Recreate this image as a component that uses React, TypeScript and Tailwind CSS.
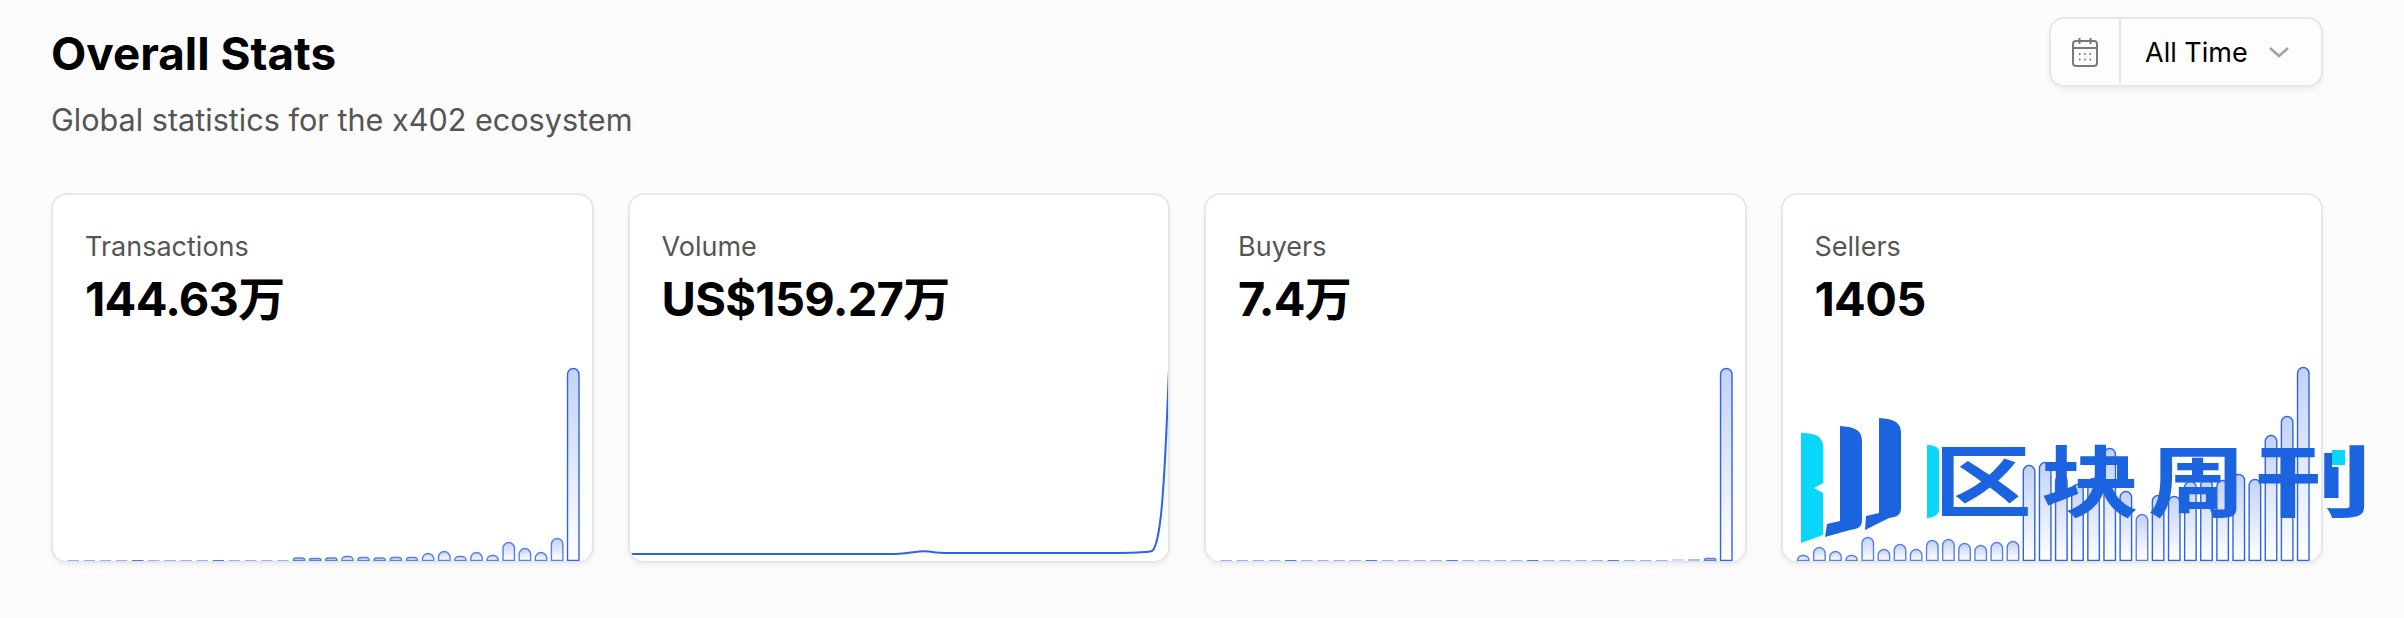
const txBars = [1, 1, 1, 1, 1, 1, 1, 1, 1, 1, 1, 1, 1, 1, 2.5, 2, 2.5, 4, 3, 2.5, 3, 3, 7, 9, 4, 8, 5, 18, 12, 8, 22, 192];
const buyerBars = [1, 1, 1, 1, 1, 1, 1, 1, 1, 1, 1, 1, 1, 1, 1, 1, 1, 1, 1, 1, 1, 1, 1, 1, 1, 1, 1, 1, 1.5, 1.5, 2, 192];
const sellerBars = [5, 13, 9, 5, 23, 11, 16, 11, 20, 21, 17, 15, 18, 19, 95, 98, 85, 76, 82, 112, 69, 46, 65, 64, 79, 81, 80, 86, 81, 125, 144, 193];

const linePath = "M0 193H260C275 193 285 190.3 295 190.300C305 190.300 300 192 320 192H480C500 192 518 191 521 190.300C525 190.300 530 175 533 130C536 90 538 30 539 8";

const BarChart = ({ bars, id }: { bars: number[]; id: string }) => {
  return (
    <svg width="538" height="200" viewBox="0 0 538 200" className="block shrink-0">
      <defs>
        <linearGradient id={id} x1="0" y1="0" x2="0" y2="1">
          <stop offset="0%" stopColor="#c3d2f6" />
          <stop offset="100%" stopColor="#ffffff" />
        </linearGradient>
      </defs>
      {bars.map((h, i) => {
        const x = 14.5 + i * 16.13;
        const w = 11.5;
        const r = Math.min(6, h, w / 2);
        const y = 199.5 - h;
        if (h <= 1.5) {
          return <rect key={i} x={x} y={y + 0.5} width={w} height={1} fill="#2f62ea" opacity={i % 5 === 4 ? 0.85 : 0.5} />;
        }
        return (
          <path
            key={i}
            d={`M${x} 199.5V${y + r}A${r} ${r} 0 0 1 ${x + r} ${y}H${x + w - r}A${r} ${r} 0 0 1 ${x + w} ${y + r}V199.5Z`}
            fill={`url(#${id})`}
            stroke="#2f62ea"
            strokeOpacity={h > 60 ? 1 : 0.8}
            strokeWidth="1.4"
          />
        );
      })}
    </svg>
  );
};

const LineChart = () => {
  return (
    <svg width="538" height="200" viewBox="0 0 538 200" className="block shrink-0">
      <defs>
        <linearGradient id="vol" x1="0" y1="0" x2="0" y2="1">
          <stop offset="0%" stopColor="#c3d2f6" />
          <stop offset="100%" stopColor="#ffffff" />
        </linearGradient>
      </defs>
      <path d={`${linePath}V193Z`} fill="url(#vol)" opacity="0.45" />
      <path d={linePath} fill="none" stroke="#2f62ea" strokeWidth="2" />
    </svg>
  );
};

const StatCard = ({ label, value, children }: { label: string; value: string; children: React.ReactNode }) => {
  return (
    <div className="h-[370px] rounded-[16px] border-2 border-[#e7e7e7] bg-white shadow-[0_3px_5px_rgba(0,0,0,0.05)] overflow-hidden flex flex-col justify-between">
      <div className="pl-[32px] pt-[35px]">
        <div className="text-[27px] leading-[34px] text-[#555555]">{label}</div>
        <div className="mt-[7px] text-[47px] leading-[56px] font-bold text-black tracking-[-0.7px]">{value}</div>
      </div>
      {children}
    </div>
  );
};

const Watermark = () => {
  return (
    <div className="absolute left-[1795px] top-[410px] w-[590px] h-[140px]">
      <svg width="590" height="140" viewBox="1795 410 590 140" className="absolute left-0 top-0">
        <path d="M1801 432.7C1812 433.5 1823 434 1823.3 447V483L1814 488L1823 493V535L1801 543Z" fill="#08d7fb" />
        <path d="M1840 426C1853 427 1862 429 1862 441V520C1862 527 1858 529 1850 530L1825 537L1827 524L1840 521Z" fill="#1c63e0" />
        <path d="M1879 418C1892 419 1901 421 1901 433V508C1901 515 1897 517 1889 518L1865 530L1866 516L1879 513Z" fill="#1c63e0" />
        <path d="M1927 445C1934 445 1939 447 1939 452V510C1939 514 1934 518 1927 518Z" fill="#08d7fb" />
      </svg>
      <div className="absolute left-[139px] top-[-1px] flex text-[98px] leading-[136px] font-bold text-[#1c63e0] tracking-[9px] scale-y-80 origin-center font-['Noto_Sans_CJK_SC',sans-serif] whitespace-nowrap">
        <span>区块周</span>
        <span className="inline-block scale-x-120 origin-left">刊</span>
      </div>
      <div className="absolute left-[537px] top-[40px] w-[13px] h-[17px] bg-[#08d7fb] border-b-2 border-[#fcfcfc]" />
    </div>
  );
};

export default function App() {
  return (
    <div className="relative min-h-screen overflow-hidden bg-[#fcfcfc] pl-[51px] pr-[81px] font-['Inter','Noto_Sans_CJK_SC',sans-serif]">
      <div className="flex items-start justify-between pt-[17px]">
        <div className="pt-[10px]">
          <h1 className="text-[45.8px] leading-[54px] font-bold text-black">Overall Stats</h1>
          <p className="mt-[20px] text-[30.6px] leading-[38px] text-[#555555]">Global statistics for the x402 ecosystem</p>
        </div>
        <div className="flex h-[70px] w-[274px] items-center rounded-[15px] border-2 border-[#e7e7e7] bg-[#fdfdfd] shadow-[0_3px_5px_rgba(0,0,0,0.06)]">
          <div className="flex h-full w-[70px] items-center justify-center border-r-2 border-[#e7e7e7]">
            <svg width="30" height="32" viewBox="0 0 30 32" fill="none" stroke="#7a7a7a" strokeWidth="2">
              <rect x="3" y="5" width="24" height="25" rx="3" />
              <path d="M3 12H27M9.500 2V8M20.500 2V8" />
              <path d="M9 18H10.500M14.200 18H15.700M19.500 18H21M9 23.500H10.500M14.200 23.500H15.700M19.500 23.500H21" />
            </svg>
          </div>
          <span className="ml-[24px] pt-[2px] text-[27px] text-black">All Time</span>
          <svg width="22" height="14" viewBox="0 0 22 14" fill="none" stroke="#a3a3a3" strokeWidth="2.500" className="ml-[20px]">
            <path d="M2 3L11 11L20 3" />
          </svg>
        </div>
      </div>
      <div className="mt-[54px] grid grid-cols-4 gap-[34px]">
        <StatCard label="Transactions" value="144.63万">
          <BarChart bars={txBars} id="tx" />
        </StatCard>
        <StatCard label="Volume" value="US$159.27万">
          <LineChart />
        </StatCard>
        <StatCard label="Buyers" value="7.4万">
          <BarChart bars={buyerBars} id="buyers" />
        </StatCard>
        <StatCard label="Sellers" value="1405">
          <BarChart bars={sellerBars} id="sellers" />
        </StatCard>
      </div>
      <Watermark />
    </div>
  );
}
